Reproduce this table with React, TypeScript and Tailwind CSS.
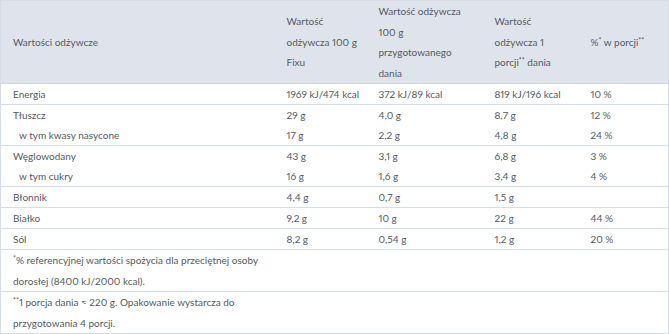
import React from "react";

type Row = { label: string; sub?: boolean; a: string; b: string; c: string; d: string };

// groups share one border; rows inside a group have none between them
const groups: Row[][] = [
  [{ label: "Energia", a: "1969 kJ/474 kcal", b: "372 kJ/89 kcal", c: "819 kJ/196 kcal", d: "10\u00a0%" }],
  [
    { label: "Tłuszcz", a: "29 g", b: "4,0 g", c: "8,7 g", d: "12\u00a0%" },
    { label: "w tym kwasy nasycone", sub: true, a: "17 g", b: "2,2 g", c: "4,8 g", d: "24\u00a0%" },
  ],
  [
    { label: "Węglowodany", a: "43 g", b: "3,1 g", c: "6,8 g", d: "3\u00a0%" },
    { label: "w tym cukry", sub: true, a: "16 g", b: "1,6 g", c: "3,4 g", d: "4\u00a0%" },
  ],
  [{ label: "Błonnik", a: "4,4 g", b: "0,7 g", c: "1,5 g", d: "" }],
  [{ label: "Białko", a: "9,2 g", b: "10 g", c: "22 g", d: "44\u00a0%" }],
  [{ label: "Sól", a: "8,2 g", b: "0,54 g", c: "1,2 g", d: "20\u00a0%" }],
];

const Sup = ({ children }: { children: React.ReactNode }) => (
  <span className="relative -top-[3px] text-[7px] leading-none">{children}</span>
);

const td = "pl-[12px] pr-[4px] py-0 align-middle";

export default function App() {
  return (
    <div className="w-[669px] h-[334px] bg-white" style={{ fontFamily: "Lato, 'Open Sans', sans-serif" }}>
      <table className="table-fixed border-collapse w-[668px] text-[10px] leading-[20.5px] text-[#545a63] border border-[#d6dde6] proportional-nums">
        <colgroup>
          <col className="w-[274px]" />
          <col className="w-[92px]" />
          <col className="w-[116px]" />
          <col className="w-[96px]" />
          <col className="w-[90px]" />
        </colgroup>
        <thead>
          <tr className="bg-[#dfe4ec] border-b border-[#d0d8e2] h-[82px] text-left">
            <th className={`${td} font-normal`}>Wartości odżywcze</th>
            <th className={`${td} font-normal pr-[8px]`}>Wartość odżywcza 100 g Fixu</th>
            <th className={`${td} font-normal pr-[8px]`}>Wartość odżywcza 100 g przygotowanego dania</th>
            <th className={`${td} font-normal pr-[8px]`}>
              Wartość odżywcza 1 porcji<Sup>**</Sup> dania
            </th>
            <th className={`${td} font-normal`}>
              %<Sup>*</Sup> w porcji<Sup>**</Sup>
            </th>
          </tr>
        </thead>
        {groups.map((g, i) => (
          <tbody key={i} className="border-b border-[#d6dde6]">
            {g.map((r) => (
              <tr key={r.label} className="h-[20px] leading-[20px]">
                <td className={`${td} ${r.sub ? "pl-[18px]" : ""}`}>{r.label}</td>
                <td className={td}>{r.a}</td>
                <td className={td}>{r.b}</td>
                <td className={td}>{r.c}</td>
                <td className={td}>{r.d}</td>
              </tr>
            ))}
          </tbody>
        ))}
        <tbody>
          <tr className="border-b border-[#d6dde6] leading-[20.5px]">
            <td className={td}>
              <Sup>*</Sup>% referencyjnej wartości spożycia dla przeciętnej osoby dorosłej (8400 kJ/2000 kcal).
            </td>
            <td className={td}></td>
            <td className={td}></td>
            <td className={td}></td>
            <td className={td}></td>
          </tr>
          <tr className="border-b border-[#d6dde6] leading-[20.5px]">
            <td className={td}>
              <Sup>**</Sup>1 porcja dania ≈ 220 g. Opakowanie wystarcza do przygotowania 4 porcji.
            </td>
            <td className={td}></td>
            <td className={td}></td>
            <td className={td}></td>
            <td className={td}></td>
          </tr>
        </tbody>
      </table>
    </div>
  );
}
